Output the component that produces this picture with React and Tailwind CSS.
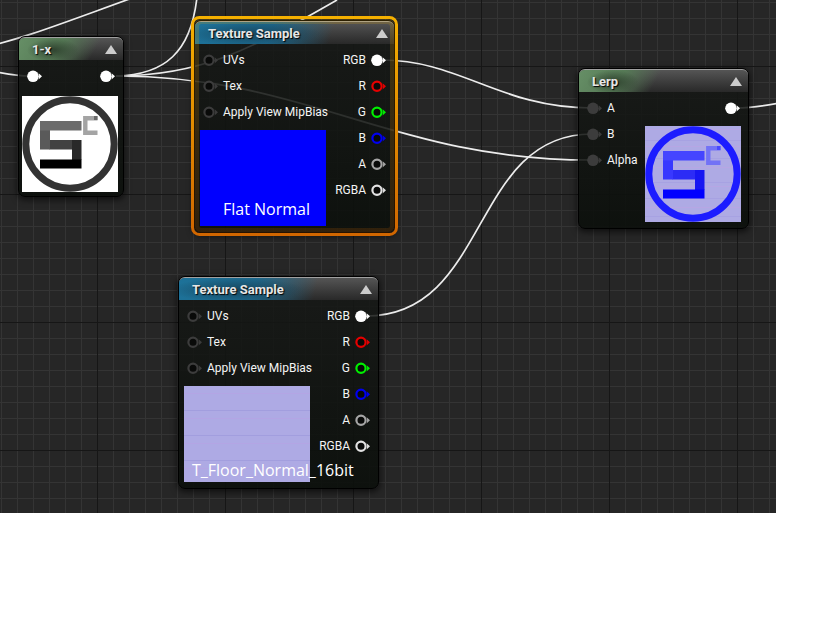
import React from "react";

const PIN_COLORS = {
  white: "#ffffff",
  red: "#e60000",
  green: "#00f000",
  blue: "#0000f0",
  gray: "#a6a6a6",
  light: "#e2e2e2",
  dim: "#3c3c3c",
};

function Pin({ color, filled }) {
  const c = PIN_COLORS[color];
  return (
    <svg width="15" height="14" viewBox="0 0 15 14" className="shrink-0" aria-hidden="true">
      {filled ? (
        <circle cx="6" cy="7.3" r="5.8" fill={c} />
      ) : (
        <circle cx="6" cy="7.3" r="4.6" fill="#090a09" stroke={c} strokeWidth="2.2" />
      )}
      <path d="M11.6 4.2 L15 7.3 L11.6 10.4 Q12.8 7.3 11.6 4.2 Z" fill={c} />
    </svg>
  );
}

function InputPin({ label, color = "dim", filled = false }) {
  return (
    <li className="flex h-[26px] items-center gap-[5px] pl-2">
      <Pin color={color} filled={filled} />
      {label && <span>{label}</span>}
    </li>
  );
}

function OutputPin({ label, color = "white", filled = false }) {
  return (
    <li className="flex h-[26px] items-center justify-end gap-[5px] pr-2">
      {label && <span>{label}</span>}
      <Pin color={color} filled={filled} />
    </li>
  );
}

function Node({ title, tint, place, children }) {
  const tints = {
    green:
      "bg-[radial-gradient(ellipse_26px_12px_at_34px_12px,#2a3b2acc_10%,transparent_100%),linear-gradient(120deg,#668f66_0px,#567a56_40px,transparent_72px)]",
    blue:
      "bg-[radial-gradient(ellipse_68px_12px_at_58px_12px,#163f54bb_10%,transparent_100%),linear-gradient(105deg,#1d7299_0px,#1d688c_75px,transparent_135px)]",
  };
  return (
    <section
      aria-label={title}
      className={`absolute rounded-[7px] border border-black bg-linear-to-b from-[#161816]/85 to-[#0b0f0b]/90 text-[12px] leading-4 text-[#f4f4f4] shadow-[0_2px_6px_1px_rgba(0,0,0,0.6)] ${place}`}
    >
      <header className="h-[23px] overflow-hidden rounded-t-[6px] border-t border-[#a0a0a0] bg-linear-to-b from-[#555555] to-[#292929]">
        <div className={`flex h-full items-center justify-between pt-px pr-[6px] pl-[13px] ${tints[tint]}`}>
          <h2 className="text-[13px] font-bold text-[#e6e6e6] [text-shadow:1px_1px_1px_#000]">{title}</h2>
          <button type="button" aria-label={`Collapse ${title}`} className="block">
            <svg width="12" height="9" viewBox="0 0 12 9" className="block" aria-hidden="true">
              <path d="M6 0 L12 9 H0 Z" fill="#cccccc" />
            </svg>
          </button>
        </div>
      </header>
      <div className="flex justify-between pt-[3px]">{children}</div>
    </section>
  );
}

function LogoPreview({ palette }) {
  const blue = palette === "blue";
  const p = blue
    ? { bg: "#aeaae4", ring: "#1c1cff", top: "#4545ff", left: "#3838ff", mid: "#2c2cf6", right: "#1717f2", base: "#0000ff", c: "#7272f6", dot: "#4848ff" }
    : { bg: "#ffffff", ring: "#333333", top: "#6c6c6c", left: "#5a5a5a", mid: "#424242", right: "#292929", base: "#000000", c: "#a4a4a4", dot: "#6a6a6a" };
  return (
    <svg width="96" height="96" viewBox="0 0 96 96" className="block" role="img" aria-label="Preview">
      <rect width="96" height="96" fill={p.bg} />
      {blue &&
        [3, 14, 20, 32, 41, 56, 60, 72, 81, 90].map((y, i) => (
          <rect key={y} y={y} width="96" height="1" fill={i % 2 ? "#a7a2e2" : "#b6a6e4"} />
        ))}
      <circle cx="48" cy="48" r="44.2" fill="none" stroke={p.ring} strokeWidth="7" />
      <rect x="18" y="25" width="10" height="28" fill={p.left} />
      <rect x="18" y="25" width="41.5" height="9.5" fill={p.top} />
      <rect x="27.5" y="44" width="23" height="9.5" fill={p.mid} />
      <rect x="18" y="44" width="10" height="9.5" fill={p.left} />
      <rect x="50" y="44" width="9.5" height="20" fill={p.right} />
      <rect x="18" y="63.5" width="41.5" height="9" fill={p.base} />
      <path d="M75.5 22.3 H63.3 V36.7 H75.5" fill="none" stroke={p.c} strokeWidth="4.4" />
      <rect x="72" y="20" width="3.5" height="4" fill={p.dot} />
    </svg>
  );
}

function TextureNode({ place, caption, captionInset, preview }) {
  return (
    <Node title="Texture Sample" tint="blue" place={place}>
      <div>
        <ul>
          <InputPin label="UVs" />
          <InputPin label="Tex" />
          <InputPin label="Apply View MipBias" />
        </ul>
        <div className={`mt-[5px] ml-[5px] flex h-24 w-[126px] items-end ${preview}`}>
          <span
            className={`relative z-10 font-['Open_Sans','Noto_Sans',sans-serif] text-base leading-6 whitespace-nowrap text-white ${captionInset}`}
          >
            {caption}
          </span>
        </div>
      </div>
      <ul>
        <OutputPin label="RGB" filled />
        <OutputPin label="R" color="red" />
        <OutputPin label="G" color="green" />
        <OutputPin label="B" color="blue" />
        <OutputPin label="A" color="gray" />
        <OutputPin label="RGBA" color="light" />
      </ul>
    </Node>
  );
}

const WIRES = [
  "M-20 48 C20 40 60 24 135 -3",
  "M-8 71 C6 74 16 76 30 76",
  "M116 76 C165 75 191 52 197 -3",
  "M116 76 C200 76 250 50 337 0",
  "M116 76 C310 76 390 160 592 160",
  "M382 60 C460 60 500 108 592 108",
  "M366 316 C490 316 470 134 592 134",
  "M736 108 C758 108 768 105 790 101",
];

function Wires() {
  return (
    <svg className="absolute inset-0 h-full w-full" aria-hidden="true">
      {WIRES.map((d) => (
        <path key={d} d={d} fill="none" stroke="#ececec" strokeWidth="1.7" />
      ))}
    </svg>
  );
}

function Grid() {
  return (
    <>
      <div className="absolute inset-0 bg-[linear-gradient(to_right,#343434_1px,transparent_1px),linear-gradient(to_bottom,#343434_1px,transparent_1px)] bg-size-[16px_16px] bg-position-[1px_2px]" />
      <div className="absolute inset-0 bg-[linear-gradient(to_right,#161616_1px,transparent_1px),linear-gradient(to_bottom,#161616_1px,transparent_1px)] bg-size-[128px_128px] bg-position-[97px_66px]" />
    </>
  );
}

function SelectionOutline({ place }) {
  return (
    <svg className={`pointer-events-none absolute ${place}`} viewBox="0 0 207 220" aria-hidden="true">
      <defs>
        <linearGradient id="selection" x1="0" y1="0" x2="0" y2="1">
          <stop offset="0" stopColor="#f5b000" />
          <stop offset="1" stopColor="#d06600" />
        </linearGradient>
      </defs>
      <rect x="5.5" y="5.5" width="196" height="209" rx="5" fill="none" stroke="url(#selection)" strokeOpacity="0.18" strokeWidth="5" />
      <rect x="1.5" y="1.5" width="204" height="217" rx="7" fill="none" stroke="url(#selection)" strokeWidth="3" />
    </svg>
  );
}

export default function App() {
  return (
    <div className="min-h-screen bg-white pr-10 font-[Roboto,sans-serif]">
      <main className="relative h-[513px] overflow-hidden bg-[#262626]">
        <Grid />
        <Wires />

        <Node title="1-x" tint="green" place="left-[18px] top-[36px] h-[161px] w-[106px]">
          <div className="grow">
            <div className="flex justify-between">
              <ul>
                <InputPin color="white" filled />
              </ul>
              <ul>
                <OutputPin filled />
              </ul>
            </div>
            <div className="mt-[7px] ml-[3px]">
              <LogoPreview palette="mono" />
            </div>
          </div>
        </Node>

        <TextureNode
          place="left-[194px] top-[20px] h-[213px] w-[201px]"
          caption="Flat Normal"
          captionInset="pb-[5px] pl-[23px]"
          preview="bg-[#0000ff]"
        />
        <SelectionOutline place="left-[191px] top-[16px] h-[220px] w-[207px]" />

        <TextureNode
          place="left-[178px] top-[276px] h-[213px] w-[201px]"
          caption="T_Floor_Normal_16bit"
          captionInset="pl-2"
          preview="bg-[#aeaae4] bg-[repeating-linear-gradient(to_bottom,transparent_0px,transparent_7px,#b3a5e4_7px,#b3a5e4_8px,transparent_8px,transparent_24px,#a29ede_24px,#a29ede_25px)]"
        />

        <Node title="Lerp" tint="green" place="left-[578px] top-[68px] h-[161px] w-[171px]">
          <ul>
            <InputPin label="A" filled />
            <InputPin label="B" filled />
            <InputPin label="Alpha" filled />
          </ul>
          <div>
            <ul>
              <OutputPin filled />
            </ul>
            <div className="mt-[5px] mr-[7px]">
              <LogoPreview palette="blue" />
            </div>
          </div>
        </Node>
      </main>
    </div>
  );
}
